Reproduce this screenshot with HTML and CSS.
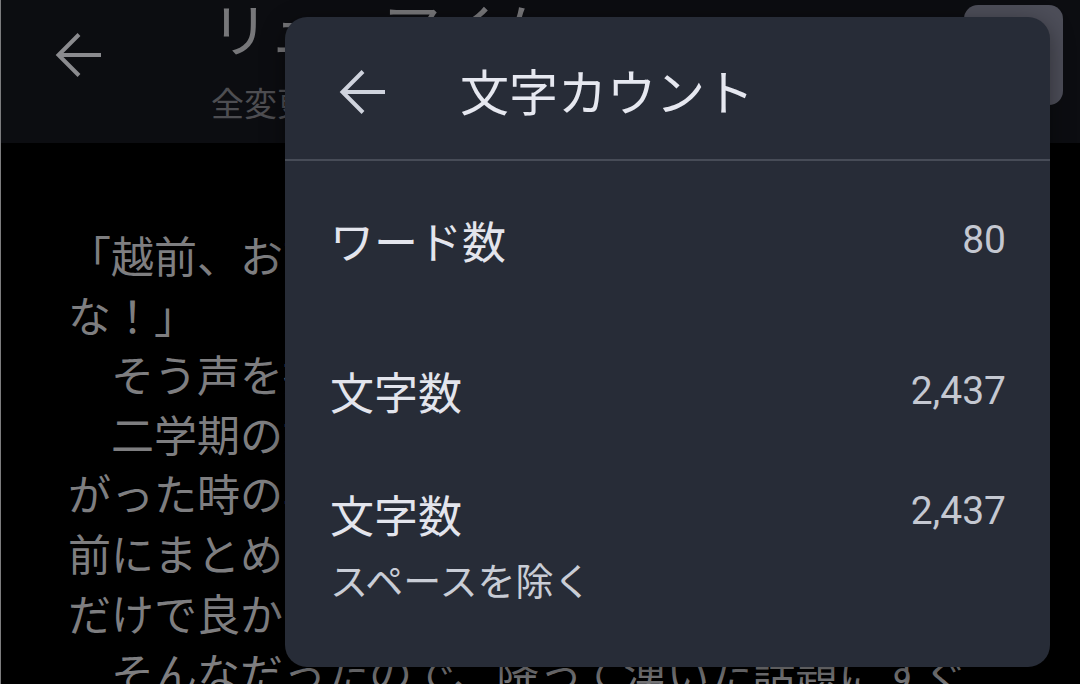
FILE: index.html
```html
<!DOCTYPE html>
<html lang="ja">
<head>
<meta charset="utf-8">
<title>文字カウント</title>
<link rel="stylesheet" href="styles.css">
</head>
<body>
<div class="screen">
  <header class="appbar">
    <svg class="appbar-back" width="48" height="48" viewBox="0 0 48 48" aria-hidden="true">
      <path d="M46 24H3M24 3.5L3.5 24 24 44.5" />
    </svg>
    <div class="appbar-titles">
      <div class="appbar-title">リューアイム</div>
      <div class="appbar-sub">全変更を保存しました</div>
    </div>
    <div class="appbar-action"></div>
  </header>

  <main class="doc">
    <div class="doc-line">「越前、お前今日は部活をサボるんじゃない</div>
    <div class="doc-line">な！」</div>
    <div class="doc-line">　そう声を掛けてきたのは、堀尾だった。</div>
    <div class="doc-line">　二学期の始業式を終え、教室が盛り上</div>
    <div class="doc-line">がった時の興奮もようやく落ち着き、皆が帰る</div>
    <div class="doc-line">前にまとめてしまおうと思っていた課題を少し</div>
    <div class="doc-line">だけで良かったのに、と思いながら顔を上げる</div>
    <div class="doc-line">　そんなだったので、降って湧いた話題にすぐ</div>
  </main>

  <section class="dialog" role="dialog" aria-label="文字カウント">
    <div class="dialog-head">
      <svg class="dialog-back" width="48" height="48" viewBox="0 0 48 48" aria-hidden="true">
        <path d="M46 24H3M24 3.5L3.5 24 24 44.5" />
      </svg>
      <h1 class="dialog-title">文字カウント</h1>
    </div>
    <div class="dialog-body">
      <div class="stat stat-first">
        <div class="stat-label">ワード数</div>
        <div class="stat-value">80</div>
      </div>
      <div class="stat stat-second">
        <div class="stat-label">文字数</div>
        <div class="stat-value">2,437</div>
      </div>
      <div class="stat stat-third">
        <div class="stat-text">
          <div class="stat-label">文字数</div>
          <div class="stat-note">スペースを除く</div>
        </div>
        <div class="stat-value stat-value-top">2,437</div>
      </div>
    </div>
  </section>
</div>
</body>
</html>
```

FILE: styles.css
```css
* {
  box-sizing: border-box;
}

html, body {
  margin: 0;
  padding: 0;
  background: #000;
}

body {
  font-family: "Noto Sans CJK JP", "Noto Sans", sans-serif;
}

.screen {
  position: relative;
  width: 1080px;
  height: 684px;
  overflow: hidden;
  background: #000;
  border-left: 1px solid #7c7c7e;
}

/* ---------- background app bar ---------- */
.appbar {
  height: 143px;
  background: #0c0d11;
  display: flex;
  align-items: flex-start;
  padding-left: 54px;
}

.appbar-back {
  flex: none;
  margin-top: 31px;
  fill: none;
  stroke: #8b8b8f;
  stroke-width: 4;
  stroke-linecap: butt;
  stroke-linejoin: miter;
}

.appbar-titles {
  margin-left: 108px;
  margin-top: -5px;
  flex: 1;
  overflow: hidden;
  white-space: nowrap;
}

.appbar-title {
  font-size: 58px;
  line-height: 64px;
  color: #77777a;
}

.appbar-sub {
  margin-top: 23px;
  font-size: 33px;
  line-height: 40px;
  color: #4e4e52;
}

.appbar-action {
  flex: none;
  width: 99px;
  height: 100px;
  margin-top: 5px;
  margin-right: 17px;
  margin-left: 20px;
  background: #4d4e59;
  border-radius: 14px;
}

/* ---------- background document ---------- */
.doc {
  padding: 82px 0 0 67px;
  font-size: 43px;
  line-height: 59.6px;
  color: #7e7e80;
}

.doc-line {
  white-space: pre;
  overflow: hidden;
}

/* ---------- dialog ---------- */
.dialog {
  position: absolute;
  left: 284px;
  top: 17px;
  width: 765px;
  height: 650px;
  background: #272c37;
  border-radius: 22px;
  box-shadow: 0 6px 24px rgba(0, 0, 0, 0.4);
}

.dialog-head {
  height: 144px;
  display: flex;
  align-items: flex-start;
  padding-left: 54px;
  border-bottom: 2px solid #474c57;
}

.dialog-back {
  flex: none;
  margin-top: 51px;
  fill: none;
  stroke: #cfd3dd;
  stroke-width: 4;
  stroke-linecap: butt;
  stroke-linejoin: miter;
}

.dialog-title {
  margin: 43px 0 0 73px;
  font-size: 49px;
  line-height: 60px;
  font-weight: 400;
  color: #e6e8f0;
}

.dialog-body {
  padding: 49px 44px 0 45px;
}

.stat {
  display: flex;
  justify-content: space-between;
  align-items: center;
}

.stat-second {
  margin-top: 91px;
}

.stat-third {
  margin-top: 63px;
  align-items: flex-start;
}

.stat-label {
  font-size: 44px;
  line-height: 60px;
  color: #e3e5ed;
}

.stat-note {
  margin-top: 10px;
  font-size: 38px;
  line-height: 50px;
  color: #c9cdd6;
}

.stat-value {
  font-family: Roboto, "Noto Sans", sans-serif;
  font-size: 39px;
  line-height: 60px;
  color: #c4c8d1;
}

.stat-value-top {
  line-height: 54px;
}
```
